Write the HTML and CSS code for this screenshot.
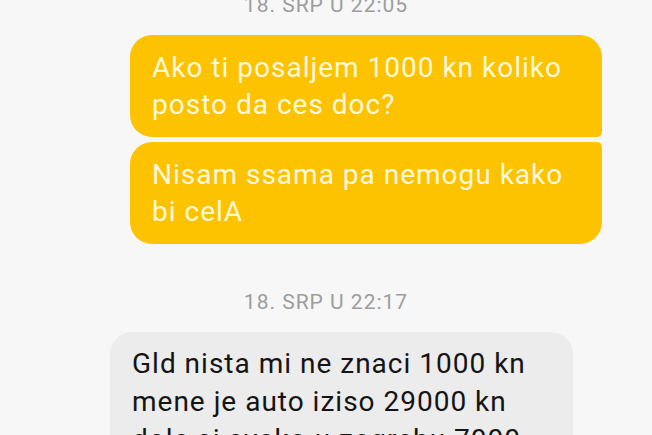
FILE: index.html
```html
<!DOCTYPE html>
<html lang="hr">
  <head>
    <meta charset="UTF-8" />
    <meta name="viewport" content="width=device-width, initial-scale=1.0" />
    <title>Poruke</title>
    <link rel="stylesheet" href="styles.css">
  </head>
  <body>
    <div class="thread">
      <!-- first group -->
      <div class="stamp stamp-first">18. SRP U 22:05</div>
      <div class="bubble bubble-out bubble-top">Ako ti posaljem 1000 kn koliko posto da ces doc?</div>
      <div class="bubble bubble-out bubble-bottom">Nisam ssama pa nemogu kako bi celA</div>

      <!-- reply -->
      <div class="stamp">18. SRP U 22:17</div>
      <div class="bubble bubble-in">Gld nista mi ne znaci 1000 kn mene je auto iziso 29000 kn dole si svako u zagrebu 7000</div>
    </div>
  </body>
</html>
```

FILE: styles.css
```css
/* Message thread */
body {
  margin: 0;
  background: #f7f7f7;
  font-family: Roboto, "Noto Sans", sans-serif;
  overflow: hidden;
}

.thread {
  display: flex;
  flex-direction: column;
}

.stamp {
  margin-top: 46px;
  text-align: center;
  font-size: 21px;
  line-height: 24px;
  letter-spacing: 1px;
  color: #9d9d9d;
}

.stamp-first {
  margin-top: -7px;
}

.bubble {
  font-size: 28px;
  line-height: 37px;
  letter-spacing: 1px;
  padding: 14px 22px;
  border-radius: 22px;
}

/* Sent messages */
.bubble-out {
  align-self: flex-end;
  max-width: 428px;
  margin-right: 50px;
  background: #fdc300;
  color: #fff8dc;
}

.bubble-top {
  margin-top: 18px;
  border-bottom-right-radius: 5px;
}

.bubble-bottom {
  margin-top: 5px;
  border-top-right-radius: 5px;
}

/* Received messages */
.bubble-in {
  align-self: flex-start;
  max-width: 419px;
  margin-left: 110px;
  margin-top: 18px;
  padding-top: 13px;
  line-height: 38px;
  background: #ececec;
  color: #141414;
}
```
